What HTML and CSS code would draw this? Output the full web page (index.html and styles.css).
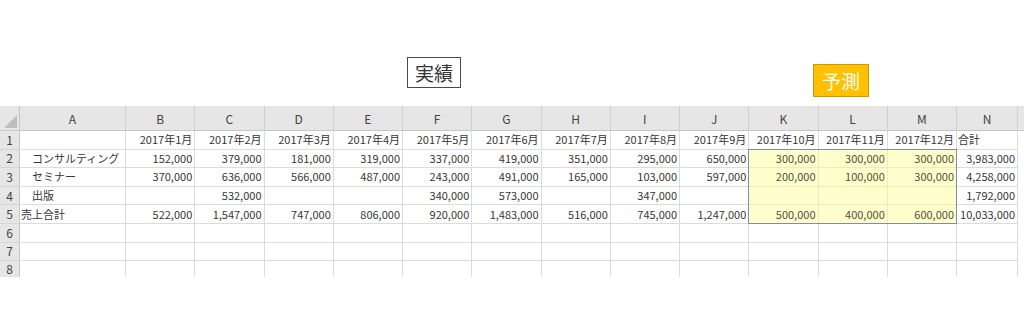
FILE: index.html
```html
<!DOCTYPE html>
<html lang="ja">
<head>
<meta charset="utf-8">
<title>売上実績と予測</title>
<link rel="stylesheet" href="styles.css">
</head>
<body>
<div class="page">
  <div class="canvas">
    <div class="shape shape-actual">実績</div>
    <div class="shape shape-forecast">予測</div>
  </div>
  <div class="sheet">
    <div class="corner"><svg width="20" height="25" viewBox="0 0 20 25"><polygon points="4,22 17,9 17,22" fill="#bdbdbd"/></svg></div>
    <div class="ch">A</div><div class="ch">B</div><div class="ch">C</div><div class="ch">D</div><div class="ch">E</div><div class="ch">F</div><div class="ch">G</div><div class="ch">H</div><div class="ch">I</div><div class="ch">J</div><div class="ch">K</div><div class="ch">L</div><div class="ch">M</div><div class="ch">N</div><div class="ch ch-end"></div>

    <div class="rh">1</div>
    <div class="c"></div>
    <div class="c num">2017年1月</div><div class="c num">2017年2月</div><div class="c num">2017年3月</div><div class="c num">2017年4月</div><div class="c num">2017年5月</div><div class="c num">2017年6月</div><div class="c num">2017年7月</div><div class="c num">2017年8月</div><div class="c num">2017年9月</div><div class="c num">2017年10月</div><div class="c num">2017年11月</div><div class="c num">2017年12月</div>
    <div class="c">合計</div><div class="c end"></div>

    <div class="rh">2</div>
    <div class="c indent">コンサルティング</div>
    <div class="c num">152,000</div><div class="c num">379,000</div><div class="c num">181,000</div><div class="c num">319,000</div><div class="c num">337,000</div><div class="c num">419,000</div><div class="c num">351,000</div><div class="c num">295,000</div><div class="c num">650,000</div>
    <div class="c num fc">300,000</div><div class="c num fc">300,000</div><div class="c num fc">300,000</div>
    <div class="c num">3,983,000</div><div class="c end"></div>

    <div class="rh">3</div>
    <div class="c indent">セミナー</div>
    <div class="c num">370,000</div><div class="c num">636,000</div><div class="c num">566,000</div><div class="c num">487,000</div><div class="c num">243,000</div><div class="c num">491,000</div><div class="c num">165,000</div><div class="c num">103,000</div><div class="c num">597,000</div>
    <div class="c num fc">200,000</div><div class="c num fc">100,000</div><div class="c num fc">300,000</div>
    <div class="c num">4,258,000</div><div class="c end"></div>

    <div class="rh">4</div>
    <div class="c indent">出版</div>
    <div class="c num"></div><div class="c num">532,000</div><div class="c num"></div><div class="c num"></div><div class="c num">340,000</div><div class="c num">573,000</div><div class="c num"></div><div class="c num">347,000</div><div class="c num"></div>
    <div class="c num fc"></div><div class="c num fc"></div><div class="c num fc"></div>
    <div class="c num">1,792,000</div><div class="c end"></div>

    <div class="rh">5</div>
    <div class="c">売上合計</div>
    <div class="c num">522,000</div><div class="c num">1,547,000</div><div class="c num">747,000</div><div class="c num">806,000</div><div class="c num">920,000</div><div class="c num">1,483,000</div><div class="c num">516,000</div><div class="c num">745,000</div><div class="c num">1,247,000</div>
    <div class="c num fc">500,000</div><div class="c num fc">400,000</div><div class="c num fc">600,000</div>
    <div class="c num">10,033,000</div><div class="c end"></div>

    <div class="rh">6</div>
    <div class="c"></div><div class="c"></div><div class="c"></div><div class="c"></div><div class="c"></div><div class="c"></div><div class="c"></div><div class="c"></div><div class="c"></div><div class="c"></div><div class="c"></div><div class="c"></div><div class="c"></div><div class="c"></div><div class="c end"></div>

    <div class="rh">7</div>
    <div class="c"></div><div class="c"></div><div class="c"></div><div class="c"></div><div class="c"></div><div class="c"></div><div class="c"></div><div class="c"></div><div class="c"></div><div class="c"></div><div class="c"></div><div class="c"></div><div class="c"></div><div class="c"></div><div class="c end"></div>

    <div class="rh rh-last">8</div>
    <div class="c last"></div><div class="c last"></div><div class="c last"></div><div class="c last"></div><div class="c last"></div><div class="c last"></div><div class="c last"></div><div class="c last"></div><div class="c last"></div><div class="c last"></div><div class="c last"></div><div class="c last"></div><div class="c last"></div><div class="c last"></div><div class="c end"></div>

    <div class="forecast-box"></div>
  </div>
</div>
</body>
</html>
```

FILE: styles.css
```css
* { box-sizing: border-box; }
html, body { margin: 0; padding: 0; background: #fff; }
body {
  font-family: "Noto Sans CJK JP", "Noto Sans", sans-serif;
  color: #3a3a3a;
}
.page { width: 1024px; height: 310px; overflow: hidden; }

.canvas { position: relative; height: 106px; }
.shape {
  position: absolute;
  display: flex;
  align-items: center;
  justify-content: center;
  font-size: 19px;
  line-height: 1;
}
.shape-actual {
  left: 407px; top: 57px; width: 54px; height: 31px;
  border: 1px solid #4a4a4a;
  color: #333;
  background: #fff;
}
.shape-forecast {
  left: 813px; top: 64px; width: 56px; height: 33px;
  background: #ffc000;
  border: 1px solid #cc9a00;
  color: #fff;
}

.sheet {
  position: relative;
  display: grid;
  grid-template-columns: 20px 106px repeat(12, 69.25px) 61px 1fr;
  grid-template-rows: 25px repeat(7, 18.6px) 1fr;
  height: 171px;
  overflow: hidden;
  font-size: 11px;
}
.corner {
  background: #e6e6e6;
  border-right: 1px solid #c6c6c6;
  border-bottom: 1px solid #c6c6c6;
}
.corner svg { display: block; }
.ch {
  background: #e6e6e6;
  border-right: 1px solid #d0d0d0;
  border-bottom: 1px solid #c6c6c6;
  display: flex;
  align-items: center;
  justify-content: center;
  font-size: 12px;
  color: #444;
  padding-top: 1px;
}
.ch-end { border-right: none; }
.rh {
  background: #e6e6e6;
  border-right: 1px solid #c6c6c6;
  border-bottom: 1px solid #d6d6d6;
  display: flex;
  align-items: center;
  justify-content: center;
  font-size: 12px;
  line-height: 1;
  color: #444;
}
.rh-last { border-bottom: none; }
.c {
  border-right: 1px solid #dcdcdc;
  border-bottom: 1px solid #dcdcdc;
  display: flex;
  align-items: center;
  padding: 0 2px 0 1px;
  white-space: nowrap;
  line-height: 1;
  color: #363636;
}
.c.last { border-bottom: none; }
.c.num { justify-content: flex-end; }
.c.indent { padding-left: 12px; }
.c.end { border-right: none; border-bottom: none; }
.c.fc {
  background: #ffffcc;
  border-right-color: #ebebc0;
  border-bottom-color: #ebebc0;
  color: #4f4f3c;
}
.forecast-box {
  position: absolute;
  grid-column: 12 / 15;
  grid-row: 3 / 7;
  top: -1px; left: -1px; right: 0; bottom: 0;
  border: 1px solid #7d8dab;
  pointer-events: none;
}
```
